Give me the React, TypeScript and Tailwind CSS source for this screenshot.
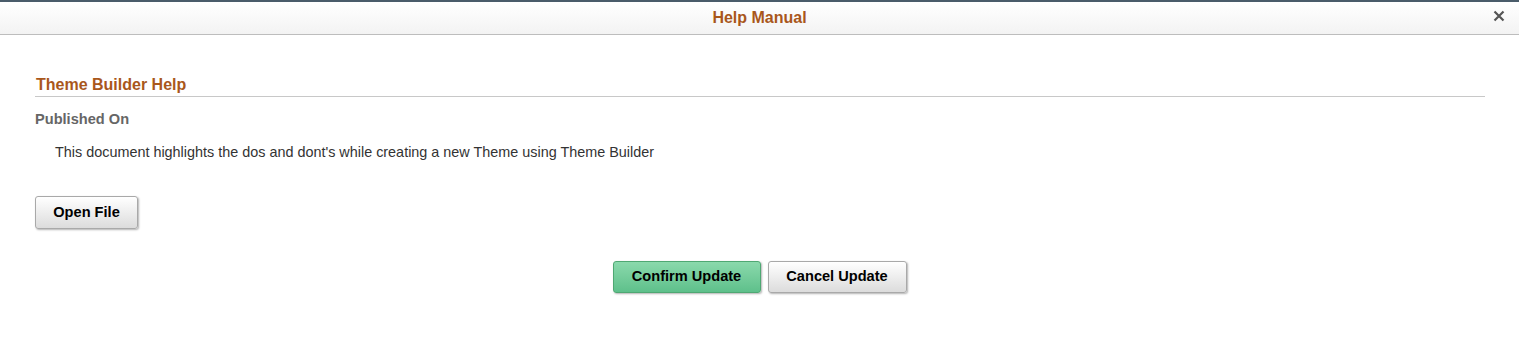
export default function App() {
  return (
    <div className="min-h-[353px] w-full bg-white font-['Liberation_Sans',Arial,sans-serif]">
      <div className="relative flex h-[35px] items-center justify-center border-t-[2px] border-b border-t-[#4a5c6a] border-b-[#bdbdbd] bg-gradient-to-b from-white to-[#f3f3f3]">
        <h1 className="text-[16px] font-bold text-[#a9571b]">Help Manual</h1>
        <button className="absolute right-[14px] top-[8px] text-[#555]" aria-label="Close">
          <svg width="12" height="12" viewBox="0 0 12 12">
            <path d="M1.5 1.5 L10.5 10.5 M10.5 1.5 L1.5 10.5" stroke="#555" strokeWidth="2.2" />
          </svg>
        </button>
      </div>
      <div className="pl-[35px] pr-[34px]">
        <h2 className="mt-[40px] border-b border-[#c8c8c8] pb-[2px] pl-px text-[16px] font-bold leading-[19px] text-[#a9571b]">
          Theme Builder Help
        </h2>
        <div className="mt-[13px] text-[14.6px] font-bold leading-[18px] text-[#666]">Published On</div>
        <p className="mt-[15px] pl-[20px] text-[14.4px] leading-[18px] text-[#333]">
          This document highlights the dos and dont's while creating a new Theme using Theme Builder
        </p>
        <button className="mt-[35px] h-[33px] w-[103px] rounded-[3px] border border-[#a9a9a9] bg-gradient-to-b from-white to-[#dcdcdc] text-[14.6px] font-bold text-black shadow-[1px_1px_2px_rgba(0,0,0,0.3)]">
          Open File
        </button>
      </div>
      <div className="mt-[32px] flex justify-center gap-[7px]">
        <button className="h-[32px] w-[148px] rounded-[3px] border border-[#4fa873] bg-gradient-to-b from-[#8ad9ac] to-[#5ec08b] text-[14.6px] font-bold text-black shadow-[1px_1px_2px_rgba(0,0,0,0.3)]">
          Confirm Update
        </button>
        <button className="h-[32px] w-[139px] rounded-[3px] border border-[#a9a9a9] bg-gradient-to-b from-white to-[#dcdcdc] text-[14.6px] font-bold text-black shadow-[1px_1px_2px_rgba(0,0,0,0.3)]">
          Cancel Update
        </button>
      </div>
    </div>
  );
}
